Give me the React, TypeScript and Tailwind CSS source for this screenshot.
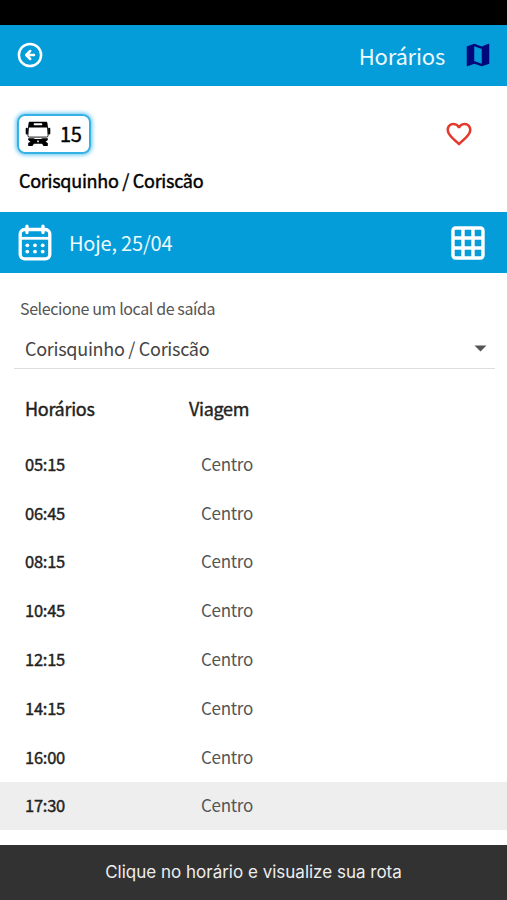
import { MdFavoriteBorder, MdMap } from "react-icons/md"

const departures = [
  { time: "05:15", trip: "Centro" },
  { time: "06:45", trip: "Centro" },
  { time: "08:15", trip: "Centro" },
  { time: "10:45", trip: "Centro" },
  { time: "12:15", trip: "Centro" },
  { time: "14:15", trip: "Centro" },
  { time: "16:00", trip: "Centro" },
  { time: "17:30", trip: "Centro", active: true },
]

function BackIcon() {
  return (
    <svg width="26" height="26" viewBox="0 0 26 26" fill="none" stroke="white" strokeWidth="2.5">
      <circle cx="13" cy="13" r="11.1" />
      <path d="M17 13H9.6M13.2 9L9.2 13l4 4" strokeWidth="2.5" strokeLinecap="round" strokeLinejoin="round" />
    </svg>
  )
}

function BusIcon() {
  return (
    <svg width="26" height="26" viewBox="0 0 26 26" fill="black">
      <path
        fillRule="evenodd"
        d="M5 0.8h16c.8 0 1.2.5 1.4 1.3L23 6.6H3l.6-4.5C3.8 1.3 4.2.8 5 .8zM9.3 2.3c-.8 0-.8 2 0 2h7.4c.8 0 .8-2 0-2z"
      />
      <path d="M3.5 6L2.9 14.5q0 1.6 1.6 1.6h17q1.6 0 1.6-1.6L22.5 6" fill="none" stroke="black" strokeWidth="0.9" />
      <rect x="0.7" y="6.8" width="2.2" height="6.6" rx="0.9" />
      <rect x="23.1" y="6.8" width="2.2" height="6.6" rx="0.9" />
      <path
        fillRule="evenodd"
        d="M3.2 17.2h5.2l1.8.9h5.6l1.8-.9h5.2v1.9l-2.2 1.7 2.2 1.2v2.9h-4.2l-1.6-2.1H9l-1.6 2.1H3.2V22l2.2-1.2-2.2-1.7zM12.2 19.6v1.6h1.6v-1.6z"
      />
    </svg>
  )
}

function CalendarIcon() {
  return (
    <svg width="34" height="37" viewBox="0 0 34 37" fill="none" stroke="white" strokeWidth="3.3">
      <rect x="2.2" y="5.5" width="29.6" height="29.3" rx="4.5" />
      <path d="M2 14.3h30" strokeWidth="2.8" />
      <path d="M9 2.2v6.4M25 2.2v6.4" strokeLinecap="round" />
      <g fill="white" stroke="none">
        <circle cx="9.3" cy="21.3" r="1.9" />
        <circle cx="17" cy="21.3" r="1.9" />
        <circle cx="24.7" cy="21.3" r="1.9" />
        <circle cx="9.3" cy="27.6" r="1.9" />
        <circle cx="17" cy="27.6" r="1.9" />
        <circle cx="24.7" cy="27.6" r="1.9" />
      </g>
    </svg>
  )
}

function GridIcon() {
  return (
    <svg width="34" height="34" viewBox="0 0 34 34" fill="none" stroke="white" strokeWidth="3.4">
      <rect x="2" y="2" width="30" height="30" rx="2.5" />
      <path d="M12 2v30M22 2v30M2 12h30M2 22h30" />
    </svg>
  )
}

export default function App() {
  return (
    <div className="flex h-[900px] w-[507px] flex-col overflow-hidden bg-white font-['Noto_Sans_CJK_SC',sans-serif] text-[#222]">
      {/* Status bar */}
      <div className="h-[25px] shrink-0 bg-black" />

      <header className="flex h-[61px] shrink-0 items-center bg-[#049dd9] pr-[14px] pb-[2px] pl-[17px] text-white">
        <BackIcon />
        <h1 className="ml-auto text-[22px] leading-[30px] tracking-[-0.2px] text-[#effaff]">Horários</h1>
        <MdMap className="ml-[18px] h-[30px] w-[30px] text-[#00087c]" />
      </header>

      {/* Line */}
      <section className="h-[126px] shrink-0 pt-[28px] pr-[33px] pl-[17px]">
        <div className="flex items-center justify-between">
          <div className="flex h-[40px] w-[74px] items-center rounded-[8px] border-2 border-[#35b1e6] pl-[6px] shadow-[0_0_4px_1px_#5cc4f0]">
            <BusIcon />
            <span className="ml-[9px] text-[20px] leading-[28px] tracking-[-0.4px] text-black [-webkit-text-stroke:0.4px_currentColor]">15</span>
          </div>
          <MdFavoriteBorder className="h-[30px] w-[30px] text-[#e5382d]" />
        </div>
        <h2 className="mt-[13px] ml-[2px] text-[18px] leading-[26px] tracking-[-0.28px] text-black [-webkit-text-stroke:0.4px_currentColor]">
          Corisquinho / Coriscão
        </h2>
      </section>

      {/* Selected date */}
      <div className="flex h-[61px] shrink-0 items-center bg-[#049dd9] pr-[22px] pl-[18px] text-white">
        <CalendarIcon />
        <span className="ml-[17px] text-[20px] leading-[28px] tracking-[-0.2px] text-[#effaff]">Hoje, 25/04</span>
        <div className="ml-auto">
          <GridIcon />
        </div>
      </div>

      {/* Departure place */}
      <section className="shrink-0 pt-[23px] pr-[12px] pl-[14px]">
        <label className="block pl-[6px] text-[16px] leading-[24px] tracking-[-0.4px] text-[#555]">
          Selecione um local de saída
        </label>
        <div className="mt-[9px] flex h-[40px] items-center justify-between border-b border-[#dedede] pr-[8px] pl-[11px]">
          <span className="-mt-[2px] text-[18px] leading-[26px] tracking-[-0.28px] text-[#444]">Corisquinho / Coriscão</span>
          <svg width="13" height="7" viewBox="0 0 13 7" fill="#555">
            <path d="M0.5 0.5h12L6.5 6.5z" />
          </svg>
        </div>
      </section>

      <div className="grid h-[71px] shrink-0 grid-cols-[164px_1fr] pt-[26px] pl-[25px] text-[18px] leading-[26px] tracking-[-0.3px] [-webkit-text-stroke:0.4px_currentColor]">
        <span>Horários</span>
        <span>Viagem</span>
      </div>

      <ul className="shrink-0">
        {departures.map((item) => (
          <li
            key={item.time}
            className={`grid h-[48.8px] grid-cols-[176px_1fr] items-center pb-px pl-[25px] ${item.active ? "bg-[#eeeeee]" : ""}`}
          >
            <span className="text-[16.5px] leading-[24px] tracking-[-0.25px] [-webkit-text-stroke:0.4px_currentColor]">
              {item.time}
            </span>
            <span className="text-[17px] leading-[24px] tracking-[-0.3px] text-[#555]">{item.trip}</span>
          </li>
        ))}
      </ul>

      <footer className="mt-auto flex h-[55px] shrink-0 items-center justify-center bg-[#323232] font-['Inter',sans-serif] text-[17px] text-[#eee]">
        Clique no horário e visualize sua rota
      </footer>
    </div>
  )
}
